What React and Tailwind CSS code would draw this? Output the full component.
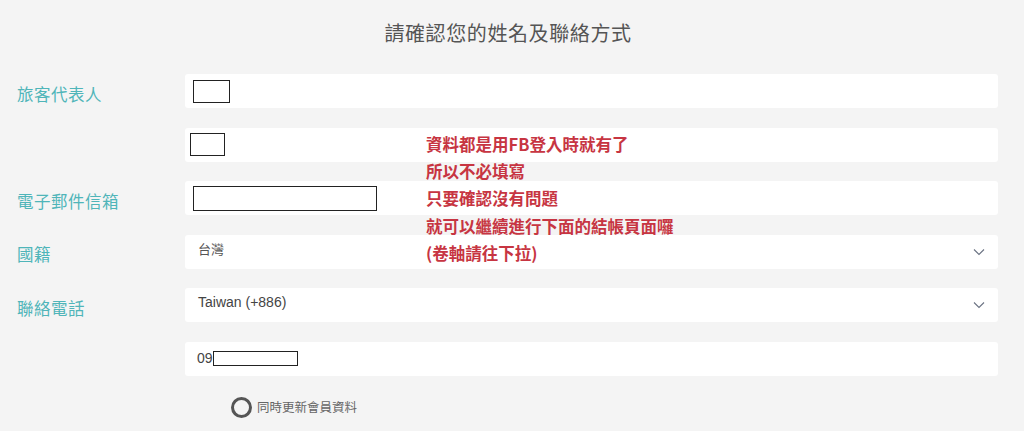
import React from "react";

const font = { fontFamily: '"Noto Sans CJK TC", "Liberation Sans", sans-serif' };

const Chevron = () => (
  <svg width="12" height="8" viewBox="0 0 12 8" className="text-gray-500">
    <path d="M1 1.5 L6 6.5 L11 1.5" fill="none" stroke="currentColor" strokeWidth="1.1" />
  </svg>
);

const Field = ({ children, select }) => (
  <div className="h-[34px] bg-white rounded-[3px] flex items-center justify-between pl-[8px] pr-[13px]">
    <div className="flex items-center">{children}</div>
    {select && <Chevron />}
  </div>
);

const Row = ({ label, children }) => (
  <div className="flex items-center">
    <div className="w-[168px] text-[16.5px] text-[#4fb5b9] tracking-[0.5px] mt-[6px]">{label}</div>
    <div className="flex-1">{children}</div>
  </div>
);

const App = () => {
  return (
    <div className="relative w-[1024px] h-[431px] bg-[#f4f4f4] overflow-hidden" style={font}>
      <div className="text-center text-[20px] tracking-[0.6px] text-[#555] pt-[18px] h-[74px] pr-[8px]">
        請確認您的姓名及聯絡方式
      </div>
      <div className="flex flex-col gap-[19.6px] pl-[17px] pr-[26px]">
        <Row label="旅客代表人">
          <Field>
            <div className="w-[37px] h-[23px] border border-[#222]" />
          </Field>
        </Row>
        <Row label="">
          <Field>
            <div className="w-[35px] h-[23px] border border-[#222] -ml-[3px]" />
          </Field>
        </Row>
        <Row label="電子郵件信箱">
          <Field>
            <div className="w-[184px] h-[25px] border border-[#222]" />
          </Field>
        </Row>
        <Row label="國籍">
          <Field select>
            <span className="text-[13px] text-[#555] pl-[5px] -mt-[6px]">台灣</span>
          </Field>
        </Row>
        <Row label="聯絡電話">
          <Field select>
            <span className="text-[14px] text-[#444] pl-[5px] -mt-[5px]" style={{ fontFamily: '"Liberation Sans", sans-serif' }}>
              Taiwan (+886)
            </span>
          </Field>
        </Row>
        <Row label="">
          <Field>
            <span className="text-[14px] text-[#444] pl-[4px]" style={{ fontFamily: '"Liberation Sans", sans-serif' }}>09</span>
            <div className="w-[85px] h-[15px] border border-[#222]" />
          </Field>
        </Row>
      </div>
      <div className="flex items-center pl-[231px] mt-[21px]">
        <div className="w-[21px] h-[21px] rounded-full border-[3.5px] border-[#555]" />
        <span className="ml-[5px] text-[12.5px] text-[#666]">同時更新會員資料</span>
      </div>

      <div className="absolute left-[426px] top-[131px] text-[16.5px] leading-[27.2px] font-semibold text-[#c73542]">
        <div>資料都是用FB登入時就有了</div>
        <div>所以不必填寫</div>
        <div>只要確認沒有問題</div>
        <div>就可以繼續進行下面的結帳頁面囉</div>
        <div>(卷軸請往下拉)</div>
      </div>
    </div>
  );
};

export default App;
